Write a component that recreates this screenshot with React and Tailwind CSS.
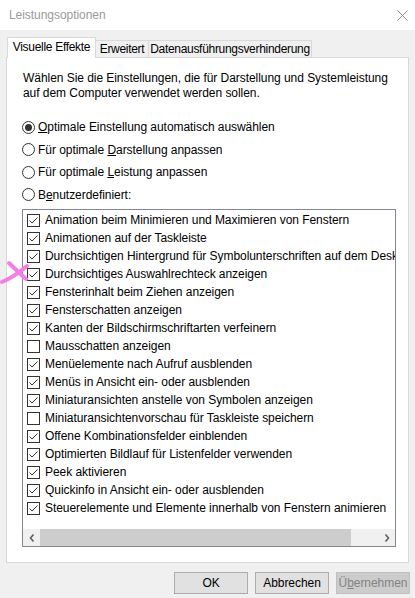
import React from "react";

const items = [
  ["Animation beim Minimieren und Maximieren von Fenstern", true],
  ["Animationen auf der Taskleiste", true],
  ["Durchsichtigen Hintergrund für Symbolunterschriften auf dem Desktop verwenden", true],
  ["Durchsichtiges Auswahlrechteck anzeigen", true],
  ["Fensterinhalt beim Ziehen anzeigen", true],
  ["Fensterschatten anzeigen", true],
  ["Kanten der Bildschirmschriftarten verfeinern", true],
  ["Mausschatten anzeigen", false],
  ["Menüelemente nach Aufruf ausblenden", true],
  ["Menüs in Ansicht ein- oder ausblenden", true],
  ["Miniaturansichten anstelle von Symbolen anzeigen", true],
  ["Miniaturansichtenvorschau für Taskleiste speichern", false],
  ["Offene Kombinationsfelder einblenden", true],
  ["Optimierten Bildlauf für Listenfelder verwenden", true],
  ["Peek aktivieren", true],
  ["Quickinfo in Ansicht ein- oder ausblenden", true],
  ["Steuerelemente und Elemente innerhalb von Fenstern animieren", true],
];

function Check({ on }) {
  return (
    <svg width="13" height="13" viewBox="0 0 13 13" className="shrink-0">
      <rect x="0.5" y="0.5" width="12" height="12" fill="#fff" stroke="#333" />
      {on && (
        <polyline points="2.5,6.5 5,9 10.5,3.5" fill="none" stroke="#333" strokeWidth="1" />
      )}
    </svg>
  );
}

function Radio({ on }) {
  return (
    <svg width="13" height="13" viewBox="0 0 13 13" className="shrink-0">
      <circle cx="6.5" cy="6.5" r="6" fill="#fff" stroke="#333" />
      {on && <circle cx="6.5" cy="6.5" r="3.5" fill="#333" />}
    </svg>
  );
}

function RadioRow({ on, children }) {
  return (
    <div className="h-[22.5px] flex items-center gap-[3px]">
      <Radio on={on} />
      <span>{children}</span>
    </div>
  );
}

export default function App() {
  return (
    <div
      className="relative w-[415px] h-[598px] bg-[#f0f0f0] flex flex-col text-[12px] tracking-[-0.05px] text-black overflow-hidden"
      style={{ fontFamily: '"Liberation Sans", Arial, sans-serif' }}
    >
      {/* title bar */}
      <div className="h-[30px] bg-white flex items-center justify-between pl-[9px] pr-[7px] shrink-0">
        <span className="text-[#999] text-[12px]">Leistungsoptionen</span>
        <svg width="11" height="11" viewBox="0 0 11 11">
          <path d="M0.5 0.5 L10.5 10.5 M10.5 0.5 L0.5 10.5" stroke="#8a8a8a" strokeWidth="1" />
        </svg>
      </div>

      {/* tabs */}
      <div className="mt-[7px] pl-[7px] flex items-end h-[20px] relative z-10 shrink-0 whitespace-nowrap tracking-[-0.3px]">
        <div className="w-[89px] h-[21px] -mb-[1px] bg-white border border-b-0 border-[#d9d9d9] flex items-center justify-center pb-[2px]">
          Visuelle Effekte
        </div>
        <div className="w-[53px] h-[17px] border border-l-0 border-b-0 border-[#d9d9d9] flex items-center justify-center">
          Erweitert
        </div>
        <div className="w-[163px] h-[17px] border border-l-0 border-b-0 border-[#d9d9d9] flex items-center justify-center">
          Datenausführungsverhinderung
        </div>
      </div>

      {/* panel */}
      <div className="mx-[6px] h-[506px] bg-white border border-[#d9d9d9] flex flex-col pl-[16px] pt-[13px] shrink-0">
        <p className="leading-[15px] whitespace-nowrap">
          Wählen Sie die Einstellungen, die für Darstellung und Systemleistung
          <br />
          auf dem Computer verwendet werden sollen.
        </p>
        <div className="mt-[15px] -ml-[1px] flex flex-col">
          <RadioRow on>
            <u>O</u>ptimale Einstellung automatisch auswählen
          </RadioRow>
          <RadioRow>
            Für optimale <u>D</u>arstellung anpassen
          </RadioRow>
          <RadioRow>
            Für optimale <u>L</u>eistung anpassen
          </RadioRow>
          <RadioRow>
            B<u>e</u>nutzerdefiniert:
          </RadioRow>
        </div>

        {/* list box */}
        <div className="mt-[3px] -ml-[1px] w-[374px] h-[338px] border border-[#828790] flex flex-col overflow-hidden">
          <div className="flex-1 pt-[1px] overflow-hidden">
            {items.map(([t, on]) => (
              <div key={t} className="h-[18px] flex items-center pl-[4px] gap-[5px] whitespace-nowrap">
                <Check on={on} />
                <span>{t}</span>
              </div>
            ))}
          </div>
          <div className="h-[17px] bg-[#f0f0f0] flex items-stretch shrink-0">
            <div className="w-[17px] flex items-center justify-center">
              <svg width="6" height="8" viewBox="0 0 6 8">
                <path d="M4.5 0.5 L1.5 4 L4.5 7.5" fill="none" stroke="#606060" strokeWidth="1.6" />
              </svg>
            </div>
            <div className="w-[311px] bg-[#cdcdcd]" />
            <div className="flex-1" />
            <div className="w-[17px] flex items-center justify-center">
              <svg width="6" height="8" viewBox="0 0 6 8">
                <path d="M1.5 0.5 L4.5 4 L1.5 7.5" fill="none" stroke="#606060" strokeWidth="1.6" />
              </svg>
            </div>
          </div>
        </div>
      </div>

      {/* buttons */}
      <div className="mt-[9px] flex justify-end gap-[7px] pr-[5px]">
        <button className="w-[74px] h-[22px] bg-[#e1e1e1] border border-[#adadad] text-black">OK</button>
        <button className="w-[74px] h-[22px] bg-[#e1e1e1] border border-[#adadad] text-black">Abbrechen</button>
        <button className="w-[74px] h-[22px] bg-[#cccccc] border border-[#bfbfbf] text-[#838383]">
          Ü<u>b</u>ernehmen
        </button>
      </div>

      {/* pink annotation mark */}
      <svg className="absolute left-0 top-[258px]" width="30" height="30" viewBox="0 0 30 30">
        <path d="M9 5 Q17 13 26 21" stroke="#f47fe4" strokeWidth="4" strokeLinecap="round" fill="none" />
        <path d="M2 24 Q14 19 27 8" stroke="#f47fe4" strokeWidth="4" strokeLinecap="round" fill="none" />
      </svg>
    </div>
  );
}
